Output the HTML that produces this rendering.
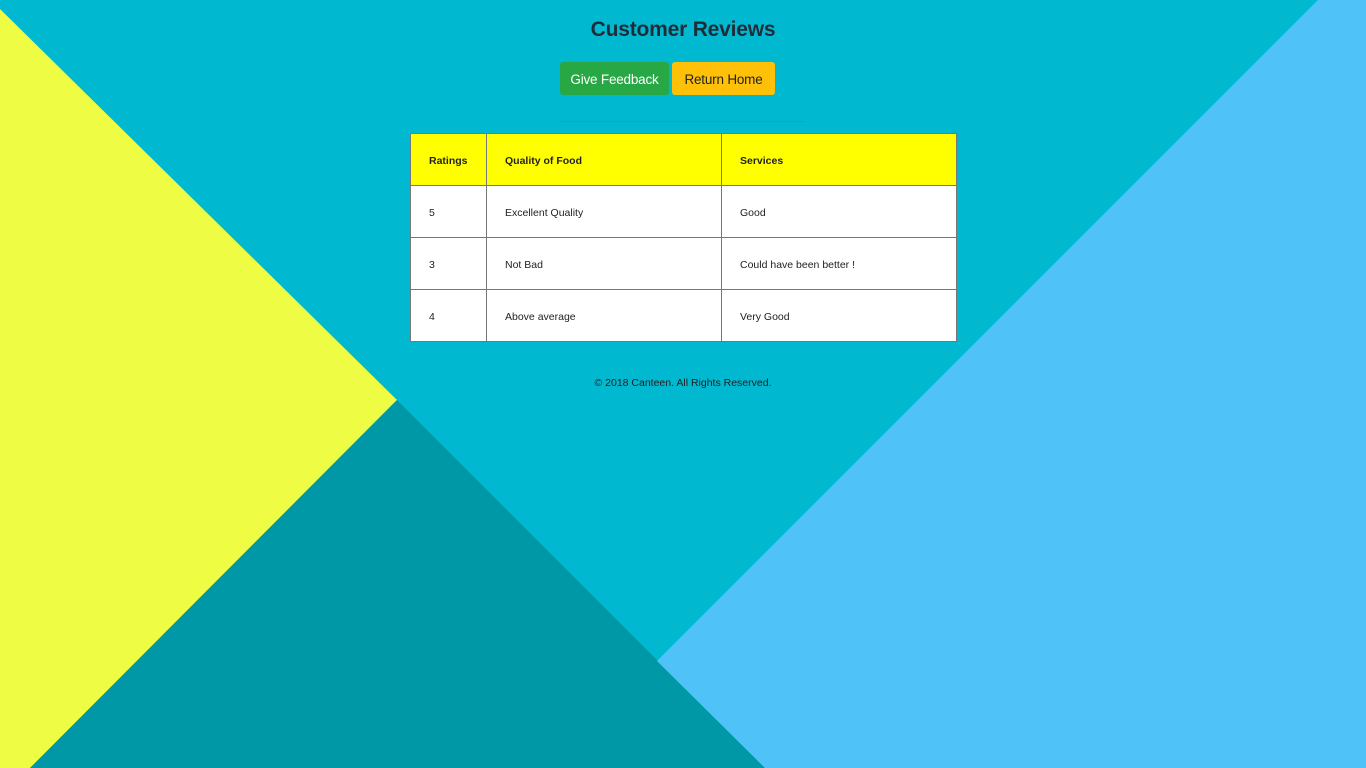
<!DOCTYPE html>
<html><head><style>
body{margin:0;width:1366px;height:768px;overflow:hidden;background:#00b8d0;font-family:"Liberation Sans",sans-serif;position:relative}
svg{position:absolute;left:0;top:0}
h1{position:absolute;top:18px;left:0;width:1366px;text-align:center;margin:0;font-size:21px;color:#1f2d3a;font-weight:bold;letter-spacing:-0.2px}
.b{position:absolute;top:62px;height:33px;line-height:35px;text-align:center;font-size:13.5px;border-radius:3px;letter-spacing:-0.2px}
hr{position:absolute;left:560px;top:121px;width:245px;margin:0;border:0;border-top:1px solid #10a6bd}
table{position:absolute;left:410px;top:133px;width:547px;border-collapse:collapse;background:#fff;font-size:10.5px;color:#222;border:1px solid #222}
td,th{border:1px solid #777;height:49px;padding:2px 0 0 18px;text-align:left}
th{background:#ff0;font-weight:bold}
.f{position:absolute;top:377px;left:0;width:1366px;text-align:center;font-size:10.5px;color:#222}
</style></head><body>
<svg width="1366" height="768">
<polygon points="0,9 397,400 30,768 0,768" fill="#eefd43"/>
<polygon points="397,400 765,768 30,768" fill="#0097a6"/>
<polygon points="1318,0 1366,0 1366,768 765,768 657,661" fill="#4fc3f8"/>
</svg>
<h1>Customer Reviews</h1>
<div class="b" style="left:560px;width:109px;background:#28a745;color:#fff">Give Feedback</div>
<div class="b" style="left:672px;width:103px;background:#ffc107;color:#222">Return Home</div>
<hr>
<table>
<tr><th style="width:57px">Ratings</th><th style="width:216px">Quality of Food</th><th>Services</th></tr>
<tr><td>5</td><td>Excellent Quality</td><td>Good</td></tr>
<tr><td>3</td><td>Not Bad</td><td>Could have been better !</td></tr>
<tr><td>4</td><td>Above average</td><td>Very Good</td></tr>
</table>
<div class="f">© 2018 Canteen. All Rights Reserved.</div>
</body></html>
